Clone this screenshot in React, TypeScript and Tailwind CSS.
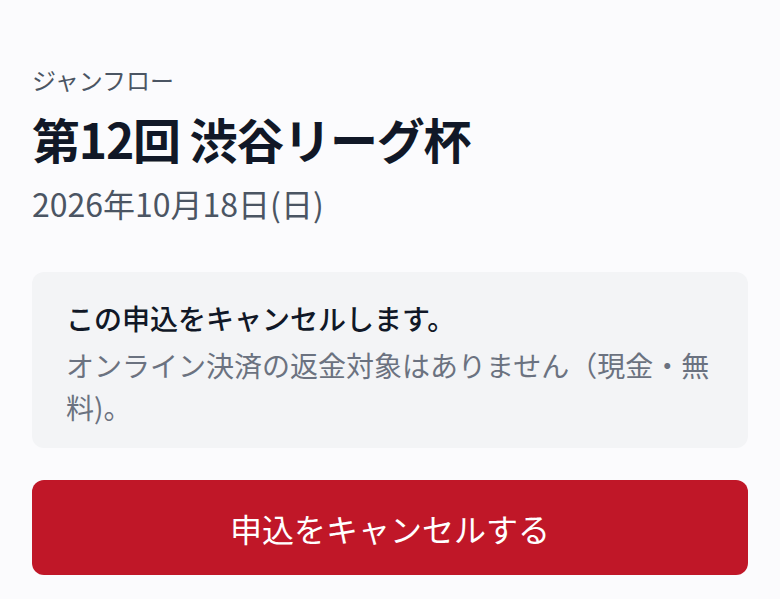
export default function App() {
  return (
    <div
      className="min-h-[599px] w-full bg-[#fbfbfd] px-[32px] pt-[62px]"
      style={{ fontFamily: '"Noto Sans CJK JP", "Noto Sans", sans-serif' }}
    >
      {/* ヘッダー */}
      <p className="text-[24px] leading-[36px] text-[#4b5563]">ジャンフロー</p>
      <h1 className="mt-[4px] text-[48px] font-bold leading-[72px] tracking-tight text-[#111827]">
        第12回 渋谷リーグ杯
      </h1>
      <p className="mt-[5px] text-[32px] leading-[48px] text-[#4b5563]">2026年10月18日(日)</p>

      {/* 確認ボックス */}
      <div className="mt-[45px] rounded-[12px] bg-[#f3f4f6] px-[34px] pb-[20px] pt-[26px]">
        <p className="text-[28px] font-medium leading-[40px] text-[#111827]">この申込をキャンセルします。</p>
        <p className="mt-[6px] text-[28px] leading-[42px] text-[#6b7280]">
          オンライン決済の返金対象はありません（現金・無料)。
        </p>
      </div>

      {/* ボタン */}
      <button className="mt-[32px] flex h-[95px] w-full items-center justify-center rounded-[12px] bg-[#c01728] text-[32px] text-white">
        申込をキャンセルする
      </button>
    </div>
  );
}
